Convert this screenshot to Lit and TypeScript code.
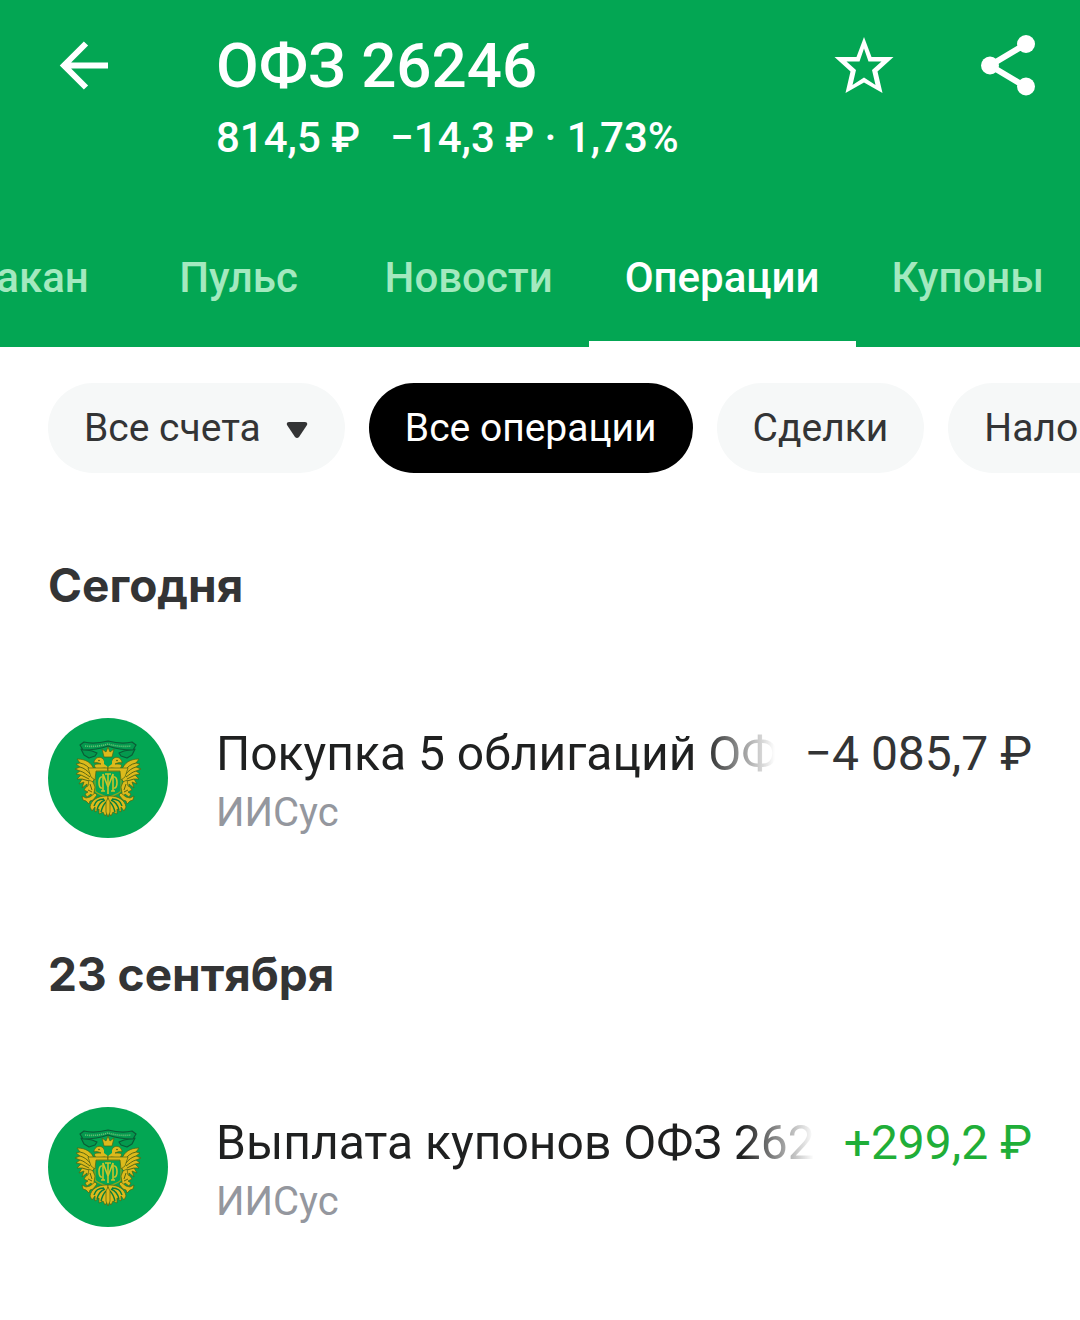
import { LitElement, html, css, svg } from "lit";
import { customElement, property } from "lit/decorators.js";
import { classMap } from "lit/directives/class-map.js";

interface Operation {
  title: string;
  account: string;
  amount: string;
  income: boolean;
}

interface Day {
  name: string;
  operations: Operation[];
}

const TABS = ["Стакан", "Пульс", "Новости", "Операции", "Купоны"];

const FILTERS = ["Все операции", "Сделки", "Налоги"];

const DAYS: Day[] = [
  {
    name: "Сегодня",
    operations: [
      { title: "Покупка 5 облигаций ОФЗ 26246", account: "ИИСус", amount: "−4 085,7 ₽", income: false },
    ],
  },
  {
    name: "23 сентября",
    operations: [
      { title: "Выплата купонов ОФЗ 26246", account: "ИИСус", amount: "+299,2 ₽", income: true },
    ],
  },
];

@customElement("bond-emblem")
export class BondEmblem extends LitElement {
  static styles = css`
    :host {
      display: block;
      flex: none;
      width: 120px;
      height: 120px;
    }

    svg {
      display: block;
    }

    .gold {
      fill: #dcba1c;
      stroke: #4a6414;
      stroke-width: 0.7;
      stroke-linejoin: round;
    }

    .ribbon {
      fill: #04994e;
      stroke: #0b5c36;
      stroke-width: 1.2;
      stroke-linejoin: round;
    }

    .dark {
      fill: none;
      stroke: #4d5f10;
      stroke-width: 0.9;
    }

    .cipher {
      fill: none;
      stroke: #c9c42a;
      stroke-width: 1.6;
    }
  `;

  // one side of the eagle, the other is its mirror
  half() {
    return svg`
      <path class="ribbon" d="M33 31 L36 37 L41 40 L47 38 L49 35 L44 33 Z"></path>
      <path class="gold" d="M46 52 C44 45 38 41 29 41 L32 45 L28 46 L32 49 L27 51 L32 53 L28 56 L33 57 L29 61 L34 61 L31 66 L36 64 L34 70 L39 66 L39 70 L43 65 L46 62 Z"></path>
      <path class="dark" d="M32 45 C37 46 41 49 43 53 M32 49 C36 50 40 53 42 56 M32 53 C36 54 39 57 42 59 M33 57 L41 61 M34 61 L41 63"></path>
      <path class="gold" d="M57 50 L49 51 C46 49 45 46 50 46 L53 46 C51 45 48 44 46 45 C46 41 50 38 54 40 C57 42 56 46 60 47 L60 52 Z"></path>
      <circle cx="51" cy="42.500" r="0.8" fill="#3f5a12"></circle>
      <path class="gold" d="M40 50 L60 50 L60 53 L48 53 L47 62 L43 59 Z"></path>
      <path class="gold" d="M41 62 L45 64 L47 69 L46 75 L48 78 L45 79 L43 76 L39 79 L37 76 L40 74 L36 72 L38 69 L40 68 Z"></path>
      <path class="dark" d="M42 66 L44 72 M40 72 L44 74"></path>
      <path class="gold" d="M34 78 L38 80 L42 79 L47 75 L49 77 L45 82 L42 83 L41 86 L38 83 L35 82 Z"></path>
      <path class="gold" d="M58 78 C50 78 43 82 42 89 L44 93 L47 89 L47 94 L51 91 L51 96 L55 94 L57 98 L60 94 L60 78 Z"></path>
      <path d="M56 81 C50 81 47 84 46 88 M57 82 C52 84 50 87 49 92 M58 84 C55 87 54 90 53 94" fill="none" stroke="#07803d" stroke-width="1.4"></path>
      <path class="cipher" d="M60 69 L55 56 L55 73 M53 73 H57 M54 59 C50 58 50 71 54 70"></path>
    `;
  }

  render() {
    return html`
      <svg viewBox="0 0 120 120" width="120" height="120" aria-hidden="true">
        <circle cx="60" cy="60" r="60" fill="#03a653"></circle>
        <path d="M47 53 H73 V72 C73 76 66 76 60 80 C54 76 47 76 47 72 Z" fill="#03a653" stroke="#8fa51c" stroke-width="1.2"></path>
        <g>${this.half()}</g>
        <g transform="matrix(-1 0 0 1 120 0)">${this.half()}</g>
        <path class="cipher" d="M60 56 V76 M57 56 H63"></path>
        <path class="ribbon" d="M32 27 L36 24 C44 26 52 25 60 23 C68 25 76 26 84 24 L88 27 L85 32 C76 32 68 31 60 28 C52 31 44 32 35 32 Z"></path>
        <path d="M37 28 C45 29 53 28 60 26 C67 28 75 29 83 28" fill="none" stroke="#63bd72" stroke-width="1.6" stroke-dasharray="1.2 0.8"></path>
        <path d="M56 41 H64 V46 L60 49 L56 46 Z" fill="#03a653"></path>
        <path class="gold" d="M56 39 L54 31 L58 34 L60 29 L62 34 L66 31 L64 39 Z"></path>
        <path class="gold" d="M60 80 L62 84 L62 94 L60 99 L58 94 L58 84 Z"></path>
      </svg>
    `;
  }
}

@customElement("operation-row")
export class OperationRow extends LitElement {
  @property({ attribute: false }) operation!: Operation;

  static styles = css`
    :host {
      display: flex;
      align-items: flex-start;
      gap: 48px;
      padding: 0 48px;
    }

    .text {
      flex: 1;
      min-width: 0;
    }

    .line {
      display: flex;
      gap: 30px;
      padding-top: 6px;
      font-size: 48px;
      line-height: 60px;
    }

    .title {
      flex: 1;
      min-width: 0;
      overflow: hidden;
      white-space: nowrap;
      color: #1f2020;
      mask-image: linear-gradient(to left, transparent, #000 72px);
    }

    .amount {
      white-space: nowrap;
      color: #333435;
    }

    .income {
      color: #1fae38;
    }

    .account {
      font-size: 40px;
      line-height: 58px;
      color: #94979e;
    }
  `;

  render() {
    const { title, account, amount, income } = this.operation;
    return html`
      <bond-emblem></bond-emblem>
      <div class="text">
        <div class="line">
          <span class="title">${title}</span>
          <span class=${classMap({ amount: true, income })}>${amount}</span>
        </div>
        <div class="account">${account}</div>
      </div>
    `;
  }
}

@customElement("app-root")
export class AppRoot extends LitElement {
  static styles = css`
    :host {
      display: block;
      min-height: 100vh;
      overflow: hidden;
      background: #fff;
      font-family: Roboto, "Liberation Sans", sans-serif;
    }

    button {
      border: 0;
      margin: 0;
      padding: 0;
      background: none;
      font: inherit;
      color: inherit;
      white-space: nowrap;
      flex: none;
    }

    svg {
      display: block;
    }

    header {
      background: #03a653;
      color: #fff;
    }

    .bar {
      display: flex;
      align-items: flex-start;
      padding: 30px 36px 0 48px;
    }

    .name {
      flex: 1;
      padding-left: 96px;
    }

    h1 {
      margin: 0;
      font-size: 62px;
      line-height: 72px;
      font-weight: 500;
    }

    .price {
      display: flex;
      gap: 30px;
      font-size: 42px;
      line-height: 72px;
      font-weight: 500;
    }

    .actions {
      display: flex;
      gap: 72px;
    }

    .tabs {
      display: flex;
      justify-content: flex-end;
      padding-top: 33px;
    }

    .tab {
      height: 140px;
      min-width: 220px;
      padding: 6px 36px 0;
      border-bottom: 6px solid transparent;
      box-sizing: border-box;
      font-size: 42px;
      font-weight: 500;
      color: #a3e9bf;
    }

    .tab.active {
      color: #fff;
      border-color: #fff;
    }

    .filters {
      display: flex;
      gap: 24px;
      padding: 36px 0 0 48px;
    }

    .chip {
      display: flex;
      align-items: center;
      gap: 24px;
      height: 90px;
      padding: 0 36px;
      border-radius: 45px;
      background: #f6f8f8;
      color: #333435;
      font-size: 39px;
    }

    .chip.active {
      background: #000;
      color: #fff;
    }

    h2 {
      margin: 0;
      padding: 80px 48px 0;
      font-family: Inter, "Liberation Sans", sans-serif;
      font-size: 46px;
      line-height: 64px;
      font-weight: 700;
      color: #333435;
    }

    .list {
      padding: 101px 0 20px;
    }
  `;

  render() {
    return html`
      <header>
        <div class="bar">
          <button aria-label="Назад">
            <svg width="72" height="72" viewBox="0 0 72 72" fill="none" stroke="#fff" stroke-width="6">
              <path d="M60 35.500H17M38 13.500 16 35.500 38 57.500"></path>
            </svg>
          </button>
          <div class="name">
            <h1>ОФЗ 26246</h1>
            <div class="price"><span>814,5 ₽</span><span>−14,3 ₽ · 1,73%</span></div>
          </div>
          <div class="actions">
            <button aria-label="В избранное">
              <svg width="72" height="72" viewBox="0 0 72 72" fill="#fff" fill-rule="evenodd">
                <path
                  d="M36 7 43.500 27H65.500L49.500 41.500 54.500 63 36 52.500 17.500 63 22.500 41.500 6.500 27H28.500ZM36 18.500 31.500 31.500H18.500L28 40 24.500 55 36 47.500 47.500 55 44 40 53.500 31.500H40.500Z"
                ></path>
              </svg>
            </button>
            <button aria-label="Поделиться">
              <svg width="72" height="72" viewBox="0 0 72 72" fill="#fff">
                <path d="M54 14 18 35.500 54 57" fill="none" stroke="#fff" stroke-width="6"></path>
                <circle cx="54" cy="14" r="9"></circle>
                <circle cx="18" cy="35.500" r="9"></circle>
                <circle cx="54" cy="56.500" r="9"></circle>
              </svg>
            </button>
          </div>
        </div>
        <nav class="tabs">
          ${TABS.map(
            (tab) => html`<button class=${classMap({ tab: true, active: tab === "Операции" })}>${tab}</button>`
          )}
        </nav>
      </header>
      <div class="filters">
        <button class="chip">
          Все счета
          <svg width="24" height="20" viewBox="0 0 24 20" fill="#333435">
            <path d="M4 4H20Q23 4 22 7L14 19Q12 21 10 19L2 7Q1 4 4 4Z"></path>
          </svg>
        </button>
        ${FILTERS.map(
          (filter) =>
            html`<button class=${classMap({ chip: true, active: filter === "Все операции" })}>${filter}</button>`
        )}
      </div>
      ${DAYS.map(
        (day) => html`
          <section>
            <h2>${day.name}</h2>
            <div class="list">
              ${day.operations.map((item) => html`<operation-row .operation=${item}></operation-row>`)}
            </div>
          </section>
        `
      )}
    `;
  }
}
